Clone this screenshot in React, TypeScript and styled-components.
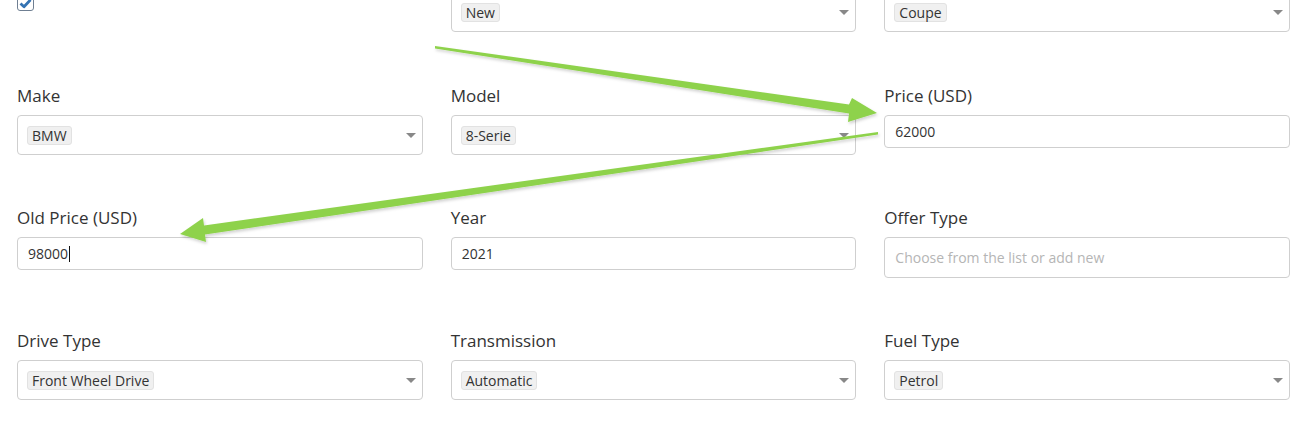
import React from "react";
import styled, { createGlobalStyle } from "styled-components";

const GlobalStyle = createGlobalStyle`
  html, body {
    margin: 0;
    padding: 0;
    background: #fff;
  }
  body {
    font-family: "Open Sans", "Noto Sans", Arial, sans-serif;
    color: #333;
  }
`;

const Page = styled.div`
  position: relative;
  width: 1308px;
  height: 425px;
  overflow: hidden;
  box-sizing: border-box;
  padding: 0 18px 0 17px;
`;

const FormGrid = styled.div`
  display: grid;
  grid-template-columns: repeat(3, 1fr);
  column-gap: 28px;
  row-gap: 53px;
  align-items: start;
  margin-top: -8px;
`;

const Field = styled.div<{ $bare?: boolean }>`
  display: flex;
  flex-direction: column;
  align-items: stretch;
  min-width: 0;
  margin-bottom: ${(p) => (p.$bare ? "1px" : "0")};
`;

const Label = styled.label`
  display: block;
  height: 20px;
  line-height: 20px;
  margin-bottom: 9px;
  font-size: 17px;
  color: #333;
  white-space: nowrap;
`;

const SelectBox = styled.div`
  box-sizing: border-box;
  height: 40px;
  display: flex;
  align-items: center;
  justify-content: space-between;
  padding: 0 6px 0 9px;
  border: 1px solid #cfcfcf;
  border-radius: 4px;
  background: #fff;
`;

const Tag = styled.span`
  display: inline-block;
  font-size: 14px;
  line-height: 17px;
  padding: 0 4px;
  color: #333;
  background: #f0f0f0;
  border: 1px solid #e2e2e2;
  border-radius: 3px;
`;

const Caret = styled.span`
  width: 0;
  height: 0;
  border-left: 5px solid transparent;
  border-right: 5px solid transparent;
  border-top: 5px solid #888;
`;

const TextBox = styled.div<{ $tall?: boolean }>`
  box-sizing: border-box;
  height: ${(p) => (p.$tall ? "41px" : "33px")};
  display: flex;
  align-items: center;
  padding: 0 10px;
  border: 1px solid #cfcfcf;
  border-radius: 4px;
  background: #fff;
  font-size: 14px;
  color: #333;
`;

const Placeholder = styled.span`
  color: #b5b5b5;
`;

const TextCaret = styled.span`
  display: inline-block;
  width: 1px;
  height: 16px;
  margin-left: 1px;
  background: #111;
`;

const CheckBox = styled.span`
  box-sizing: border-box;
  display: flex;
  align-items: center;
  justify-content: center;
  width: 17px;
  height: 16px;
  margin-top: 3px;
  border: 1px solid #6f7f92;
  border-radius: 3px;
  background: #fff;
`;

const Overlay = styled.svg`
  position: absolute;
  left: 0;
  top: 0;
  pointer-events: none;
`;

type FieldDef =
  | { kind: "select"; label?: string; value: string }
  | { kind: "text"; label?: string; value: string; caret?: boolean }
  | { kind: "placeholder"; label?: string; value: string }
  | { kind: "check"; label?: string };

// the first row is scrolled past its labels, only the controls show
const fields: FieldDef[] = [
  { kind: "check" },
  { kind: "select", value: "New" },
  { kind: "select", value: "Coupe" },
  { kind: "select", label: "Make", value: "BMW" },
  { kind: "select", label: "Model", value: "8-Serie" },
  { kind: "text", label: "Price (USD)", value: "62000" },
  { kind: "text", label: "Old Price (USD)", value: "98000", caret: true },
  { kind: "text", label: "Year", value: "2021" },
  { kind: "placeholder", label: "Offer Type", value: "Choose from the list or add new" },
  { kind: "select", label: "Drive Type", value: "Front Wheel Drive" },
  { kind: "select", label: "Transmission", value: "Automatic" },
  { kind: "select", label: "Fuel Type", value: "Petrol" },
];

function Control({ f }: { f: FieldDef }) {
  if (f.kind === "check") {
    return (
      <CheckBox>
        <svg width="13" height="11" viewBox="0 0 13 11">
          <path d="M1.5 5.5 L5 8.8 L11.5 1.8" fill="none" stroke="#3473b3" strokeWidth="2.8" strokeLinejoin="round" />
        </svg>
      </CheckBox>
    );
  }
  if (f.kind === "select") {
    return (
      <SelectBox>
        <Tag>{f.value}</Tag>
        <Caret />
      </SelectBox>
    );
  }
  if (f.kind === "placeholder") {
    return (
      <TextBox $tall>
        <Placeholder>{f.value}</Placeholder>
      </TextBox>
    );
  }
  return (
    <TextBox>
      {f.value}
      {f.caret && <TextCaret />}
    </TextBox>
  );
}

function Arrows() {
  return (
    <Overlay width="1308" height="425" viewBox="0 0 1308 425">
      <defs>
        <filter id="sh" x="-5%" y="-50%" width="110%" height="200%">
          <feDropShadow dx="1" dy="2" stdDeviation="1.5" floodColor="#000" floodOpacity="0.18" />
        </filter>
      </defs>
      <g fill="#8ed24c" filter="url(#sh)">
        <polygon points="435,46 849,104.5 852,98 877,113 848,122 849,113.5 435,48.5" />
        <polygon points="878,132 204,225.5 203,218 180,234 206,242 205,234.5 878,134.5" />
      </g>
    </Overlay>
  );
}

export default function App() {
  return (
    <>
      <GlobalStyle />
      <Page>
        <FormGrid>
          {fields.map((f, i) => (
            <Field key={i} $bare={!f.label}>
              {f.label && <Label>{f.label}</Label>}
              <Control f={f} />
            </Field>
          ))}
        </FormGrid>
        <Arrows />
      </Page>
    </>
  );
}
